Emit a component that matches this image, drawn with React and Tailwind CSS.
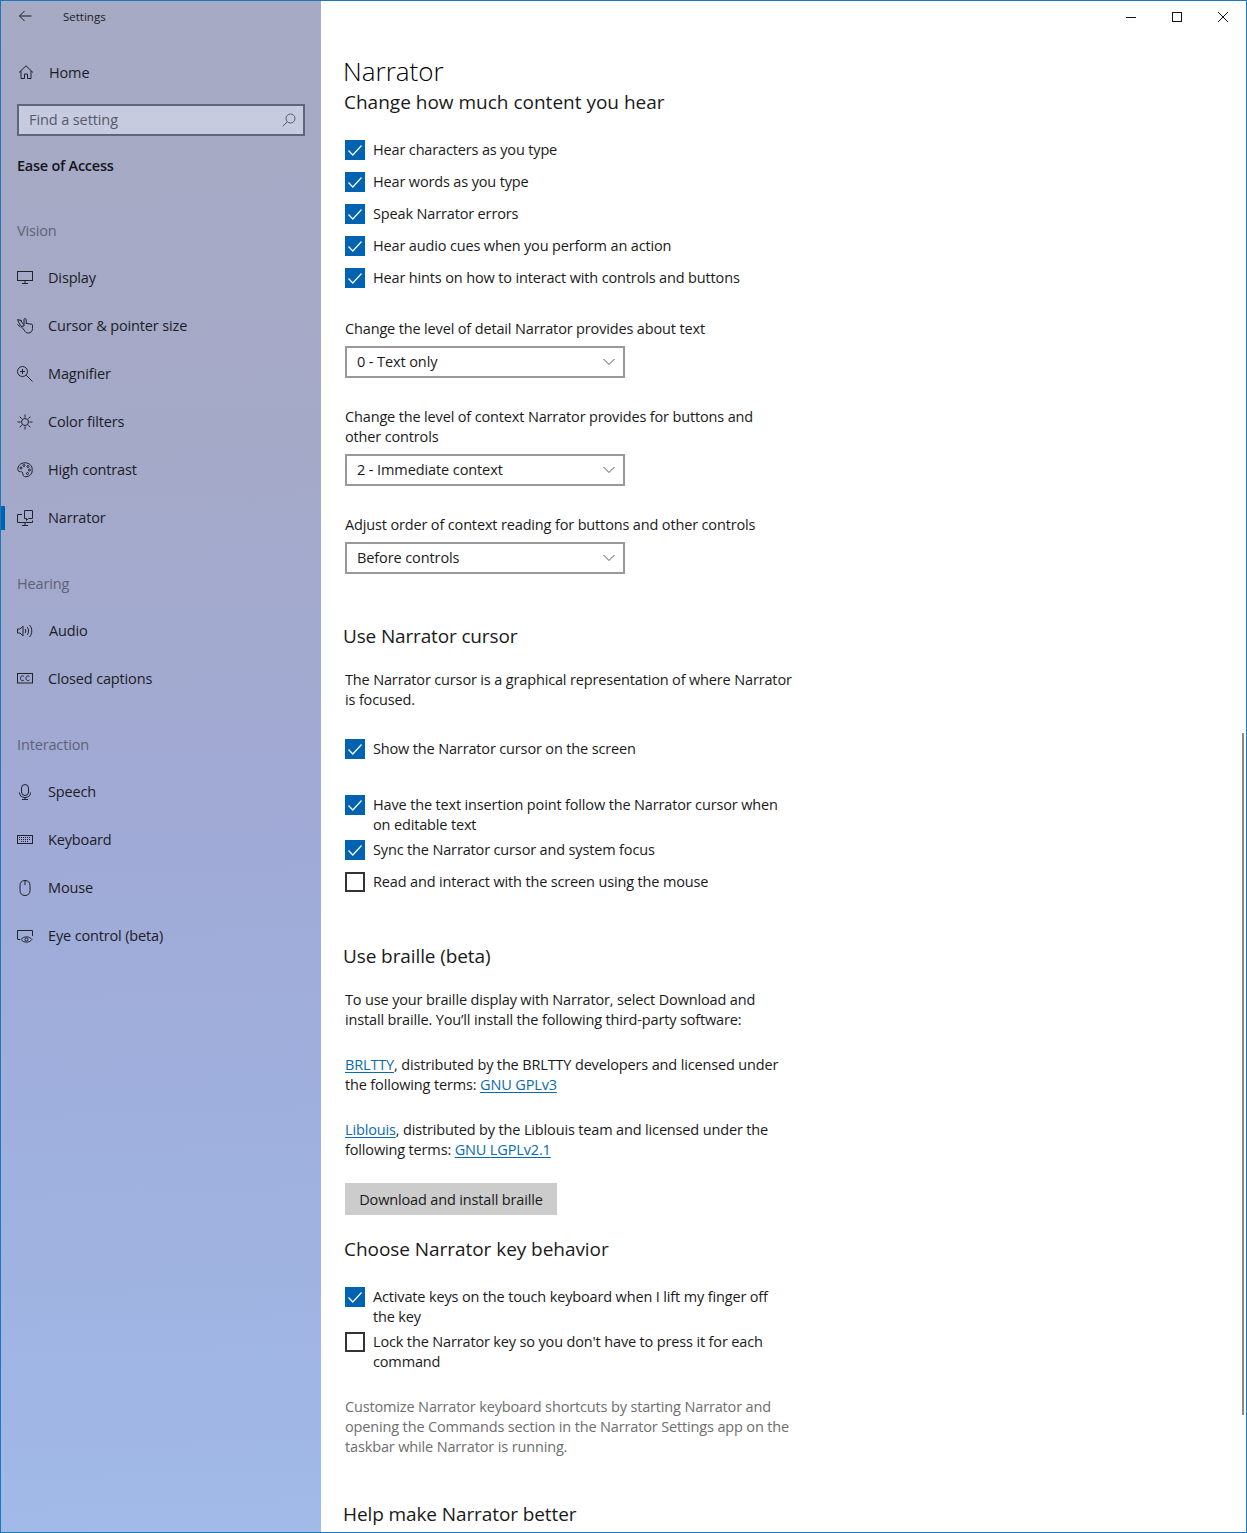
const Ic = ({ children, className = "" }) => (
  <svg width="16" height="16" viewBox="0 0 16 16" fill="none" stroke="#20222c" strokeWidth="1" className={"shrink-0 " + className}>{children}</svg>
);

const icons = {
  home: <path d="M1 8.500 8 1.800l7 6.700M3 7v7.500h3.500V10h3v4.500H13V7" />,
  display: <><rect x="0.500" y="1.500" width="15" height="9" /><path d="M8 10.500v3M5 13.500h6" /></>,
  cursor: <><path d="M.5 1.500l2 4.500 2.500 3M.5 1.500 5 3M.5 6.500l3 2.500M3 1.500l3.500 5" /><path d="M7 8V1.600c0-1.400 2.200-1.400 2.200 0V6c0-1 2-1 2 .2 0-1 2-1 2 .3.200-.8 2.300-.6 2.300.7v3.300c0 2.800-1.700 4.500-4.200 4.500-2 0-3.200-1-4-2.800L5 9.500C4.300 8 6 7.300 7 8.500" /></>,
  magnifier: <><circle cx="5.500" cy="5.500" r="5" /><path d="M9.200 9.200l6.300 6.300M3 5.500h5M5.500 3v5" /></>,
  color: <><circle cx="8" cy="8" r="3.500" /><path d="M8 .5v3M8 12.500v3M.5 8h3M12.500 8h3M2.700 2.700l2 2M11.300 11.300l2 2M2.700 13.300l2-2M11.300 4.700l2-2" /></>,
  contrast: <><path d="M8 .8C3.500.8.600 4 .8 7.500 1 10 3 9.500 4.500 9.800c1.500.3 1.300 2 1.500 3 .3 1.600 2 2.200 4 1.800 3.500-.8 5.500-3.500 5.200-7C15.300 3.500 12 .8 8 .8z" /><circle cx="4" cy="6" r="1" /><circle cx="7" cy="3.500" r="1" /><circle cx="11" cy="4.500" r="1" /><circle cx="12.500" cy="8" r="1" /><circle cx="10.500" cy="11.500" r="1" /></>,
  narrator: <><path d="M7.500.5h8v8h-4l-2 2V8.500h-2zM5 4.500H.5v8h15v-2" /><path d="M8 12.500v2.500M5 15.500h6" /></>,
  audio: <><path d="M.5 6v4h2.500l3 3V3L3 6zM8 6c1 1 1 3 0 4M10 4c2 2 2 6 0 8M12.500 2c3 3 3 9 0 12" /></>,
  cc: <><rect x="0.500" y="2.500" width="15" height="9.500" /><path d="M7 5.500C6 4.500 3.500 4.500 3.500 7.250S6 10 7 9M12.500 5.500c-1-1-3.500-1-3.500 1.750S11.500 10 12.500 9" /></>,
  speech: <><rect x="4.500" y="0.500" width="7" height="11" rx="3.500" /><path d="M2.500 8.500c0 3.500 2.500 5 5.500 5s5.500-1.500 5.500-5M8 13.500v2M5 15.500h6" /></>,
  keyboard: <><rect x="0.500" y="3.500" width="15" height="8" /><path d="M2 5.500h12M2 7.500h12M4 9.500h8" strokeDasharray="1 1" /></>,
  mouse: <path d="M8 .5C4.500.5 3 2.500 3 5.500v5c0 3 2 5 5 5s5-2 5-5v-5C13 2.500 11.500.5 8 .5zM8 .5V5" />,
  eye: <><path d="M.5 11V2.500h15V8M.5 11.500H3" /><path d="M4 11.500c2.500-3.500 8.500-3.500 11 0-2.500 3.500-8.500 3.500-11 0z" /><circle cx="9.500" cy="11.500" r="1.500" /></>,
};

const NavItem = ({ icon, label, active, gap = "gap-[15px]" }) => (
  <div className={"relative flex items-center h-[48px] pl-[16px] " + gap}>
    {active && <div className="absolute left-0 top-[12px] w-[4px] h-[24px] bg-[#0063b1]" />}
    <Ic>{icons[icon]}</Ic>
    <span className="text-[14.500px] tracking-[-0.15px] leading-[20px] text-[#1b1d26]">{label}</span>
  </div>
);

const Group = ({ children, className = "" }) => (
  <div className={"pl-[16px] h-[20px] text-[14.500px] tracking-[-0.15px] leading-[20px] text-[#5d6278] " + className}>{children}</div>
);

const Check = ({ checked = true, className = "", children }) => (
  <div className={"flex gap-[8px] text-[14.500px] tracking-[-0.15px] leading-[20px] text-[#1a1a1a] " + className}>
    {checked ? (
      <div className="w-[20px] h-[20px] shrink-0 bg-[#0063b1] flex items-center justify-center">
        <svg width="16" height="16" viewBox="0 0 16 16" fill="none" stroke="#fff" strokeWidth="1.200"><path d="M1.500 8.500 5.800 13 14.500 3.500" /></svg>
      </div>
    ) : (
      <div className="w-[20px] h-[20px] shrink-0 border-2 border-[#333333] bg-white" />
    )}
    <span className="w-[420px]">{children}</span>
  </div>
);

const Label = ({ children, className = "" }) => (
  <div className={"text-[14.500px] tracking-[-0.15px] leading-[20px] w-[450px] " + className}>{children}</div>
);

const Select = ({ value, className = "" }) => (
  <div className={"flex items-center justify-between w-[280px] h-[32px] border-2 border-[#999999] pl-[10px] pr-[8px] text-[14.500px] tracking-[-0.1px] text-[#1a1a1a] " + className}>
    <span>{value}</span>
    <svg width="12" height="8" viewBox="0 0 12 8" fill="none" stroke="#555555" strokeWidth="1"><path d="M.5 1 6 6.500 11.500 1" /></svg>
  </div>
);

const Heading = ({ children, className = "" }) => (
  <h2 className={"text-[19px] leading-[26px] text-[#1a1a1a] " + className}>{children}</h2>
);

const A = ({ children }) => <a className="text-[#0a6ab0] underline underline-offset-2">{children}</a>;

export default function App() {
  return (
    <div className="flex w-[1247px] h-[1533px] overflow-hidden bg-white border border-[#1b78bd] font-['Open_Sans',sans-serif] relative">
      <aside className="w-[320px] shrink-0 flex flex-col bg-[linear-gradient(178deg,#a6aac3_0%,#a4a9c8_30%,#a0aad6_55%,#9fb2e0_80%,#a1bae8_100%)]">
        <div className="flex items-center h-[31px] pl-[17px]">
          <svg width="14" height="14" viewBox="0 0 14 14" fill="none" stroke="#1b1d26" strokeWidth="1"><path d="M13.500 6H1.500M6.500 1 1.500 6l5 5" /></svg>
          <span className="ml-[31px] text-[11.500px] text-[#1b1d26]">Settings</span>
        </div>
        <div className="flex items-center h-[48px] mt-[16px] pl-[17px] gap-[15px]">
          <Ic>{icons.home}</Ic>
          <span className="text-[14.500px] tracking-[-0.15px] leading-[20px] text-[#1b1d26] pt-[1px]">Home</span>
        </div>
        <div className="mx-[16px] mt-[8px] h-[32px] w-[288px] border-2 border-[#5f667a] bg-[#c7cbdf] flex items-center justify-between pl-[10px] pr-[7px] text-[14.500px] tracking-[-0.1px] text-[#555a6c]">
          <span>Find a setting</span>
          <svg width="14" height="14" viewBox="0 0 14 14" fill="none" stroke="#555a6c" strokeWidth="1"><circle cx="8.500" cy="5.500" r="4.500" /><path d="M5.300 8.700 .8 13.300" /></svg>
        </div>
        <div className="pl-[16px] mt-[20px] h-[20px] text-[14.500px] tracking-[-0.25px] leading-[20px] font-semibold text-[#14151c]">Ease of Access</div>
        <Group className="mt-[45px]">Vision</Group>
        <div className="mt-[13px]">
          <NavItem icon="display" label="Display" />
          <NavItem icon="cursor" label="Cursor &amp; pointer size" />
          <NavItem icon="magnifier" label="Magnifier" />
          <NavItem icon="color" label="Color filters" />
          <NavItem icon="contrast" label="High contrast" />
          <NavItem icon="narrator" label="Narrator" active />
        </div>
        <Group className="mt-[32px]">Hearing</Group>
        <div className="mt-[13px]">
          <NavItem icon="audio" label="Audio" gap="gap-[16px]" />
          <NavItem icon="cc" label="Closed captions" />
        </div>
        <Group className="mt-[32px]">Interaction</Group>
        <div className="mt-[13px]">
          <NavItem icon="speech" label="Speech" />
          <NavItem icon="keyboard" label="Keyboard" />
          <NavItem icon="mouse" label="Mouse" />
          <NavItem icon="eye" label="Eye control (beta)" />
        </div>
      </aside>

      <main className="flex-1 pl-[24px] relative text-[#1a1a1a]">
        <div className="absolute right-[0px] top-[8px] flex">
          <div className="w-[46px] h-[16px] flex justify-center items-center"><svg width="12" height="12" viewBox="0 0 12 12" stroke="#111" fill="none"><path d="M1 6.500h10" /></svg></div>
          <div className="w-[46px] h-[16px] flex justify-center items-center"><svg width="12" height="12" viewBox="0 0 12 12" stroke="#111" fill="none"><rect x="1.500" y="1.500" width="9" height="9" /></svg></div>
          <div className="w-[46px] h-[16px] flex justify-center items-center"><svg width="12" height="12" viewBox="0 0 12 12" stroke="#111" fill="none"><path d="M1 1l10 10M11 1 1 11" /></svg></div>
        </div>
        <div className="absolute right-[2px] top-[732px] w-[2px] h-[682px] bg-[#8a8a8a]" />

        <h1 className="-ml-[2px] mt-[52px] h-[36px] text-[26px] font-light leading-[36px] text-black">Narrator</h1>
        <Heading className="-ml-[1px]">Change how much content you hear</Heading>

        <Check className="mt-[25px]">Hear characters as you type</Check>
        <Check className="mt-[12px]">Hear words as you type</Check>
        <Check className="mt-[12px]">Speak Narrator errors</Check>
        <Check className="mt-[12px]">Hear audio cues when you perform an action</Check>
        <Check className="mt-[12px]">Hear hints on how to interact with controls and buttons</Check>

        <Label className="mt-[31px]">Change the level of detail Narrator provides about text</Label>
        <Select value="0 - Text only" className="mt-[7px]" />
        <Label className="mt-[29px]">Change the level of context Narrator provides for buttons and<br />other controls</Label>
        <Select value="2 - Immediate context" className="mt-[7px]" />
        <Label className="mt-[29px]">Adjust order of context reading for buttons and other controls</Label>
        <Select value="Before controls" className="mt-[7px]" />

        <Heading className="mt-[49px] -ml-[2px] tracking-[-0.15px]">Use Narrator cursor</Heading>
        <Label className="mt-[21px]">The Narrator cursor is a graphical representation of where Narrator is focused.</Label>
        <Check className="mt-[29px]">Show the Narrator cursor on the screen</Check>
        <Check className="mt-[36px]">Have the text insertion point follow the Narrator cursor when on editable text</Check>
        <Check className="mt-[5px]">Sync the Narrator cursor and system focus</Check>
        <Check checked={false} className="mt-[12px]">Read and interact with the screen using the mouse</Check>

        <Heading className="mt-[51px] -ml-[2px] tracking-[-0.1px]">Use braille (beta)</Heading>
        <Label className="mt-[21px]">To use your braille display with Narrator, select Download and install braille. You’ll install the following third-party software:</Label>
        <Label className="mt-[25px]"><A>BRLTTY</A>, distributed by the BRLTTY developers and licensed under the following terms: <A>GNU GPLv3</A></Label>
        <Label className="mt-[25px]"><A>Liblouis</A>, distributed by the Liblouis team and licensed under the following terms: <A>GNU LGPLv2.1</A></Label>
        <div className="mt-[23px] w-[212px] h-[32px] bg-[#cccccc] flex items-center justify-center pt-[1px] text-[14.500px] tracking-[-0.15px] text-[#1a1a1a]">Download and install braille</div>

        <Heading className="mt-[21px] -ml-[1px] tracking-[-0.05px]">Choose Narrator key behavior</Heading>
        <Check className="mt-[25px]">Activate keys on the touch keyboard when I lift my finger off the key</Check>
        <Check checked={false} className="mt-[5px]">Lock the Narrator key so you don't have to press it for each command</Check>
        <Label className="mt-[25px] text-[#6e6e6e]">Customize Narrator keyboard shortcuts by starting Narrator and opening the Commands section in the Narrator Settings app on the taskbar while Narrator is running.</Label>
        <Heading className="mt-[44px] -ml-[2px] tracking-[-0.1px]">Help make Narrator better</Heading>
      </main>
    </div>
  );
}
